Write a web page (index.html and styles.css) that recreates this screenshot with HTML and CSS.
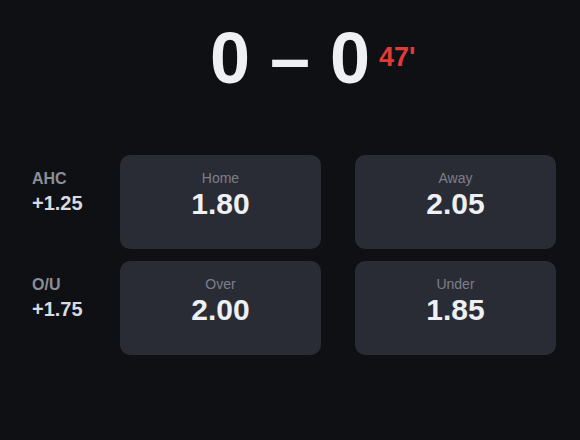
FILE: index.html
```html
<!DOCTYPE html>
<html>
<head>
<meta charset="utf-8">
<link rel="stylesheet" href="styles.css">
</head>
<body>
<div class="page">
  <div class="header">
    <div class="score">0 – 0<span class="minute">47'</span></div>
  </div>
  <div class="markets">
    <div class="row">
      <div class="label"><div class="name">AHC</div><div class="line">+1.25</div></div>
      <div class="pair">
        <div class="card"><div class="pick">Home</div><div class="odds">1.80</div></div>
        <div class="card"><div class="pick">Away</div><div class="odds">2.05</div></div>
      </div>
    </div>
    <div class="row">
      <div class="label"><div class="name">O/U</div><div class="line">+1.75</div></div>
      <div class="pair">
        <div class="card"><div class="pick">Over</div><div class="odds">2.00</div></div>
        <div class="card"><div class="pick">Under</div><div class="odds">1.85</div></div>
      </div>
    </div>
  </div>
</div>
</body>
</html>
```
FILE: styles.css
```css
html, body {
  margin: 0;
  padding: 0;
  background: #0f1014;
  font-family: "Liberation Sans", Arial, sans-serif;
}
.page {
  width: 580px;
  height: 440px;
  box-sizing: border-box;
  padding: 22px 24px 0 32px;
}
.header {
  display: flex;
  justify-content: center;
  padding-right: 8px;
}
.score {
  position: relative;
  font-size: 72px;
  line-height: 72px;
  font-weight: 700;
  color: #eef0f4;
}
.minute {
  position: absolute;
  left: calc(100% + 9px);
  top: 50%;
  transform: translateY(-50%);
  font-size: 27px;
  line-height: 30px;
  color: #e23a3a;
  margin-top: -1px;
}
.markets {
  margin-top: 61px;
  display: flex;
  flex-direction: column;
  gap: 12px;
}
.row {
  display: flex;
}
.label {
  flex: 0 0 88px;
  padding-top: 14px;
}
.pair {
  flex: 1;
  display: flex;
  gap: 34px;
}
.name {
  font-size: 16px;
  line-height: 20px;
  font-weight: 700;
  color: #8b8e98;
}
.line {
  margin-top: 2px;
  font-size: 20px;
  line-height: 24px;
  font-weight: 700;
  color: #d9dbe0;
}
.card {
  flex: 1;
  height: 94px;
  box-sizing: border-box;
  background: #2a2c35;
  border-radius: 10px;
  padding-top: 15px;
  text-align: center;
}
.pick {
  font-size: 14px;
  line-height: 17px;
  color: #7c7f8a;
}
.odds {
  font-size: 30px;
  line-height: 34px;
  font-weight: 700;
  color: #eef0f4;
}
```
